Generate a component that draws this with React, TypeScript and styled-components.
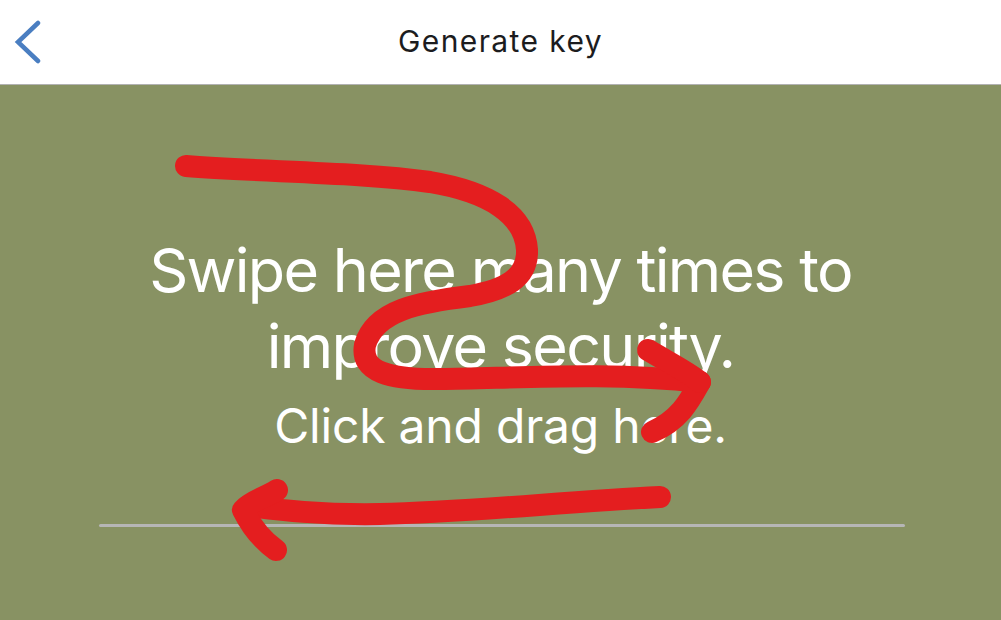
import React from "react";
import styled, { createGlobalStyle } from "styled-components";

const GlobalStyle = createGlobalStyle`
  html, body {
    margin: 0;
    padding: 0;
    background: #ffffff;
  }
  body {
    font-family: Inter, "Noto Sans", "Liberation Sans", sans-serif;
    -webkit-font-smoothing: antialiased;
  }
`;

const Screen = styled.div`
  width: 1001px;
  height: 620px;
  display: flex;
  flex-direction: column;
  overflow: hidden;
`;

const NavBar = styled.header`
  flex: 0 0 84px;
  display: grid;
  grid-template-columns: 80px 1fr 80px;
  align-items: center;
  background: #ffffff;
  border-bottom: 1px solid #b2b2b2;
`;

const BackButton = styled.button`
  border: 0;
  background: transparent;
  padding: 0 0 0 13px;
  height: 100%;
  display: flex;
  align-items: center;
  cursor: pointer;
`;

const Title = styled.h1`
  margin: 0;
  text-align: center;
  font-size: 30px;
  font-weight: 400;
  color: #1c1c1e;
  letter-spacing: 1.4px;
  padding-bottom: 2px;
`;

const SwipeArea = styled.main`
  position: relative;
  flex: 1;
  background: #889263;
  display: flex;
  flex-direction: column;
  align-items: center;
  padding-top: 147px;
  color: #ffffff;
`;

const Prompt = styled.p`
  margin: 0;
  text-align: center;
  font-size: 61px;
  line-height: 76px;
  font-weight: 400;
  letter-spacing: -1.7px;
  max-width: 760px;
`;

const Hint = styled.p`
  margin: 13px 0 0;
  text-align: center;
  font-size: 48px;
  line-height: 58px;
  font-weight: 400;
  letter-spacing: -0.2px;
`;

const Divider = styled.div`
  align-self: stretch;
  margin: 69px 96px 0 99px;
  height: 3px;
  border-radius: 2px;
  background: #b6b6b6;
`;

const Scribble = styled.svg`
  position: absolute;
  left: 0;
  top: -85px;
  width: 1001px;
  height: 620px;
  pointer-events: none;
`;

const ChevronLeft = () => (
  <svg width="28" height="44" viewBox="0 0 28 44" aria-hidden>
    <path
      d="M25 3 L5 22 L25 41"
      fill="none"
      stroke="#4a7ec1"
      strokeWidth="4.5"
      strokeLinecap="round"
      strokeLinejoin="miter"
    />
  </svg>
);

export default function App() {
  return (
    <>
      <GlobalStyle />
      <Screen>
        <NavBar>
          <BackButton aria-label="Back">
            <ChevronLeft />
          </BackButton>
          <Title>Generate key</Title>
          <span />
        </NavBar>
        <SwipeArea>
          <Prompt>Swipe here many times to improve security.</Prompt>
          <Hint>Click and drag here.</Hint>
          <Divider />
          <Scribble viewBox="0 0 1001 620" aria-hidden>
            <g
              fill="none"
              stroke="#e41e1f"
              strokeWidth="22"
              strokeLinecap="round"
              strokeLinejoin="round"
            >
              <path d="M186 166 C 260 172, 360 172, 430 182 C 490 192, 525 215, 527 250 C 528 278, 505 290, 470 296 C 420 302, 375 310, 365 345 C 360 372, 390 380, 440 379 C 520 378, 610 372, 700 382 C 690 400, 680 420, 652 432" />
              <path d="M648 350 C 668 362, 688 372, 700 382" />
              <path d="M660 497 C 560 502, 470 512, 380 514 C 320 515, 280 510, 248 506" />
              <path d="M277 490 C 265 498, 252 500, 243 510 C 252 528, 262 540, 276 550" />
            </g>
          </Scribble>
        </SwipeArea>
      </Screen>
    </>
  );
}
